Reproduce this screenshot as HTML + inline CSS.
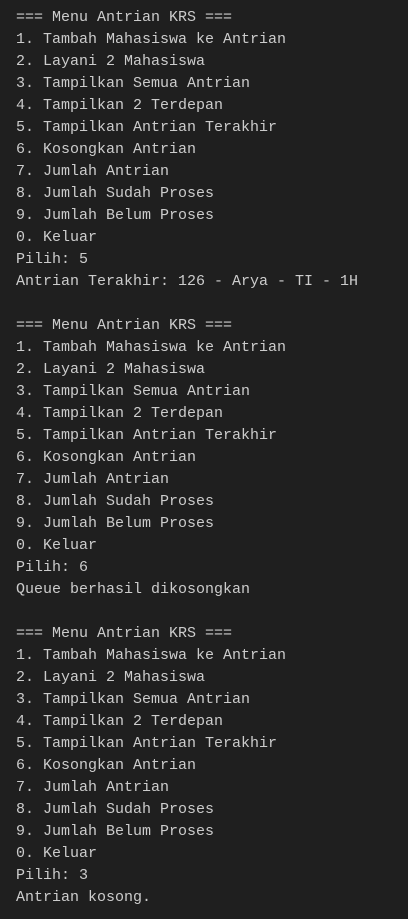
<!DOCTYPE html>
<html><head><meta charset="utf-8"><style>
html,body{margin:0;padding:0;background:#1f1f1f;width:408px;height:919px;overflow:hidden}
pre{margin:0;padding:7px 0 0 16px;font-family:"Liberation Mono",monospace;font-size:15px;line-height:22px;color:#cccccc}
</style></head><body><pre>=== Menu Antrian KRS ===
1. Tambah Mahasiswa ke Antrian
2. Layani 2 Mahasiswa
3. Tampilkan Semua Antrian
4. Tampilkan 2 Terdepan
5. Tampilkan Antrian Terakhir
6. Kosongkan Antrian
7. Jumlah Antrian
8. Jumlah Sudah Proses
9. Jumlah Belum Proses
0. Keluar
Pilih: 5
Antrian Terakhir: 126 - Arya - TI - 1H

=== Menu Antrian KRS ===
1. Tambah Mahasiswa ke Antrian
2. Layani 2 Mahasiswa
3. Tampilkan Semua Antrian
4. Tampilkan 2 Terdepan
5. Tampilkan Antrian Terakhir
6. Kosongkan Antrian
7. Jumlah Antrian
8. Jumlah Sudah Proses
9. Jumlah Belum Proses
0. Keluar
Pilih: 6
Queue berhasil dikosongkan

=== Menu Antrian KRS ===
1. Tambah Mahasiswa ke Antrian
2. Layani 2 Mahasiswa
3. Tampilkan Semua Antrian
4. Tampilkan 2 Terdepan
5. Tampilkan Antrian Terakhir
6. Kosongkan Antrian
7. Jumlah Antrian
8. Jumlah Sudah Proses
9. Jumlah Belum Proses
0. Keluar
Pilih: 3
Antrian kosong.</pre></body></html>
